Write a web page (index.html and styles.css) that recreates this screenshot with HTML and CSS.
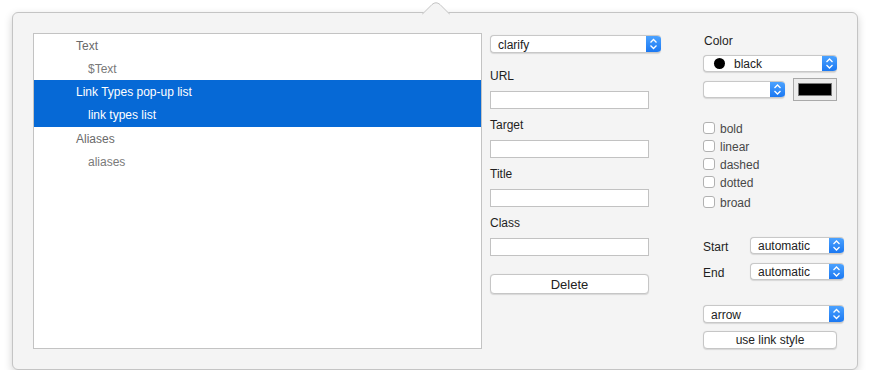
FILE: index.html
```html
<!DOCTYPE html>
<html>
<head>
    <meta charset="UTF-8">
    <title>Link Inspector</title>
    <link rel="stylesheet" href="styles.css">
</head>
<body>
    <div class="popover">
        <svg class="popover-arrow" width="28" height="14" viewBox="0 0 28 14">
            <path d="M0 14 L0 13 L10 3.5 Q14 0 18 3.5 L28 13 L28 14 Z" fill="#f4f4f4"/>
            <path d="M0 13.5 L10 3.5 Q14 0 18 3.5 L28 13.5" fill="none" stroke="#c4c4c4" stroke-width="1"/>
        </svg>

        <div class="outline">
            <div class="row head">Text</div>
            <div class="row sub">$Text</div>
            <div class="row head selected">Link Types pop-up list</div>
            <div class="row sub selected">link types list</div>
            <div class="row head">Aliases</div>
            <div class="row sub">aliases</div>
        </div>

        <div class="link-fields">
            <div class="popup popup-wide">
                <span class="popup-label">clarify</span>
                <span class="stepper"><svg width="15" height="18" viewBox="0 0 15 18"><path d="M4.5 7.5 L7.5 4.5 L10.5 7.5 M4.5 10.5 L7.5 13.5 L10.5 10.5" fill="none" stroke="#fff" stroke-width="1.3"/></svg></span>
            </div>
            <div class="field-label first">URL</div>
            <div class="text-field"></div>
            <div class="field-label">Target</div>
            <div class="text-field"></div>
            <div class="field-label">Title</div>
            <div class="text-field"></div>
            <div class="field-label">Class</div>
            <div class="text-field"></div>
            <button class="push-btn delete-btn">Delete</button>
        </div>

        <div class="style-panel">
            <div class="panel-label">Color</div>
            <div class="popup color-popup">
                <span class="popup-label"><span class="swatch-dot"></span>black</span>
                <span class="stepper"><svg width="15" height="17" viewBox="0 0 15 17"><path d="M4.5 7 L7.5 4 L10.5 7 M4.5 10 L7.5 13 L10.5 10" fill="none" stroke="#fff" stroke-width="1.3"/></svg></span>
            </div>
            <div class="color-row">
                <div class="popup small-popup">
                    <span class="popup-label"></span>
                    <span class="stepper"><svg width="15" height="17" viewBox="0 0 15 17"><path d="M4.5 7 L7.5 4 L10.5 7 M4.5 10 L7.5 13 L10.5 10" fill="none" stroke="#fff" stroke-width="1.3"/></svg></span>
                </div>
                <div class="color-well"><div class="well-fill"></div></div>
            </div>

            <div class="checks">
                <label class="check"><span class="box"></span>bold</label>
                <label class="check"><span class="box"></span>linear</label>
                <label class="check"><span class="box"></span>dashed</label>
                <label class="check"><span class="box"></span>dotted</label>
                <label class="check broad"><span class="box"></span>broad</label>
            </div>

            <div class="end-row start">
                <span class="end-label">Start</span>
                <div class="popup end-popup">
                    <span class="popup-label">automatic</span>
                    <span class="stepper"><svg width="15" height="17" viewBox="0 0 15 17"><path d="M4.5 7 L7.5 4 L10.5 7 M4.5 10 L7.5 13 L10.5 10" fill="none" stroke="#fff" stroke-width="1.3"/></svg></span>
                </div>
            </div>
            <div class="end-row">
                <span class="end-label">End</span>
                <div class="popup end-popup">
                    <span class="popup-label">automatic</span>
                    <span class="stepper"><svg width="15" height="17" viewBox="0 0 15 17"><path d="M4.5 7 L7.5 4 L10.5 7 M4.5 10 L7.5 13 L10.5 10" fill="none" stroke="#fff" stroke-width="1.3"/></svg></span>
                </div>
            </div>

            <div class="popup arrow-popup">
                <span class="popup-label">arrow</span>
                <span class="stepper"><svg width="15" height="18" viewBox="0 0 15 18"><path d="M4.5 7.5 L7.5 4.5 L10.5 7.5 M4.5 10.5 L7.5 13.5 L10.5 10.5" fill="none" stroke="#fff" stroke-width="1.3"/></svg></span>
            </div>
            <button class="push-btn style-btn">use link style</button>
        </div>
    </div>
</body>
</html>
```

FILE: styles.css
```css
* {
    box-sizing: border-box;
}
body {
    margin: 0;
    background: #fff;
    font-family: "Liberation Sans", Arial, sans-serif;
    font-size: 12px;
    color: #222;
}
.popover {
    position: relative;
    margin: 12px 0 0 12px;
    width: 846px;
    height: 358px;
    background: #f4f4f4;
    border: 1px solid #c4c4c4;
    border-radius: 6px;
    box-shadow: 0 3px 9px rgba(0,0,0,0.18);
    display: flex;
    align-items: flex-start;
    padding: 20px 12px 20px 20px;
}
.popover-arrow {
    position: absolute;
    top: -12px;
    left: 409px;
}
/* outline list */
.outline {
    width: 449px;
    height: 316px;
    background: #fff;
    border: 1px solid #c3c3c3;
}
.row {
    height: 23px;
    line-height: 25px;
    white-space: nowrap;
}
.row.head {
    padding-left: 42px;
    color: #6a6a6a;
}
.row.sub {
    padding-left: 54px;
    color: #7a7a7a;
}
.row.sub.selected {
    height: 24px;
    line-height: 24px;
}
.row.selected {
    background: #0669d6;
    color: #fff;
}
/* middle column */
.link-fields {
    margin-left: 8px;
    width: 171px;
    padding-top: 2px;
}
.field-label {
    height: 16px;
    line-height: 16px;
    margin: 8px 0 7px;
    color: #1e1e1e;
}
.field-label.first {
    margin-top: 15px;
}
.text-field {
    width: 159px;
    height: 18px;
    background: #fff;
    border: 1px solid #c2c2c2;
}
/* popup buttons */
.popup {
    display: flex;
    height: 17px;
    background: #fff;
    border: 1px solid #c8c8c8;
    border-right: none;
    border-radius: 4px;
    box-shadow: 0 0.5px 1px rgba(0,0,0,0.12);
    overflow: hidden;
}
.popup-label {
    flex: 1;
    display: flex;
    align-items: center;
    padding: 1px 0 0 7px;
    color: #222;
    white-space: nowrap;
}
.stepper {
    width: 15px;
    display: flex;
    align-items: center;
    justify-content: center;
    background: linear-gradient(#4ba2ff, #1b78f2);
}
.stepper svg {
    display: block;
}
.popup-wide {
    width: 171px;
    height: 18px;
}
/* push buttons */
.push-btn {
    display: block;
    background: #fff;
    border: 1px solid #c6c6c6;
    border-radius: 4px;
    box-shadow: 0 0.5px 1px rgba(0,0,0,0.12);
    font-family: inherit;
    color: #222;
    padding: 0;
}
.delete-btn {
    width: 159px;
    height: 20px;
    margin-top: 18px;
    font-size: 13px;
}
/* right column */
.style-panel {
    margin-left: 42px;
    width: 141px;
}
.panel-label {
    height: 14px;
    line-height: 14px;
    margin-top: 1px;
    padding-left: 1px;
    color: #1e1e1e;
}
.color-popup {
    width: 134px;
    margin-top: 7px;
}
.swatch-dot {
    width: 11px;
    height: 11px;
    border-radius: 50%;
    background: #000;
    margin: -1px 9px 0 3px;
}
.color-row {
    display: flex;
    align-items: center;
    gap: 8px;
    margin-top: 6px;
    height: 23px;
}
.small-popup {
    width: 82px;
}
.color-well {
    width: 44px;
    height: 23px;
    border: 1px solid #a9a9a9;
    background: #ececec;
    padding: 4px;
}
.well-fill {
    height: 13px;
    background: #000;
    border: 1px solid #7a7a7a;
}
.checks {
    margin-top: 18px;
}
.check {
    display: flex;
    align-items: center;
    height: 18px;
    padding-top: 1px;
    color: #484848;
}
.check.broad {
    margin-top: 2px;
}
.box {
    width: 12px;
    height: 12px;
    margin-top: -1px;
    background: #fff;
    border: 1px solid #b1b1b1;
    border-radius: 3px;
    margin-right: 5px;
}
.end-row {
    display: flex;
    align-items: center;
    height: 17px;
    margin-top: 9px;
}
.end-row.start {
    margin-top: 26px;
}
.end-label {
    width: 47px;
    line-height: 14px;
    padding-top: 2px;
    align-self: flex-start;
    margin-top: 1px;
    color: #1e1e1e;
}
.end-popup {
    width: 94px;
}
.arrow-popup {
    width: 141px;
    height: 18px;
    margin-top: 25px;
}
.style-btn {
    width: 134px;
    height: 18px;
    margin-top: 8px;
    font-size: 12px;
}
```
